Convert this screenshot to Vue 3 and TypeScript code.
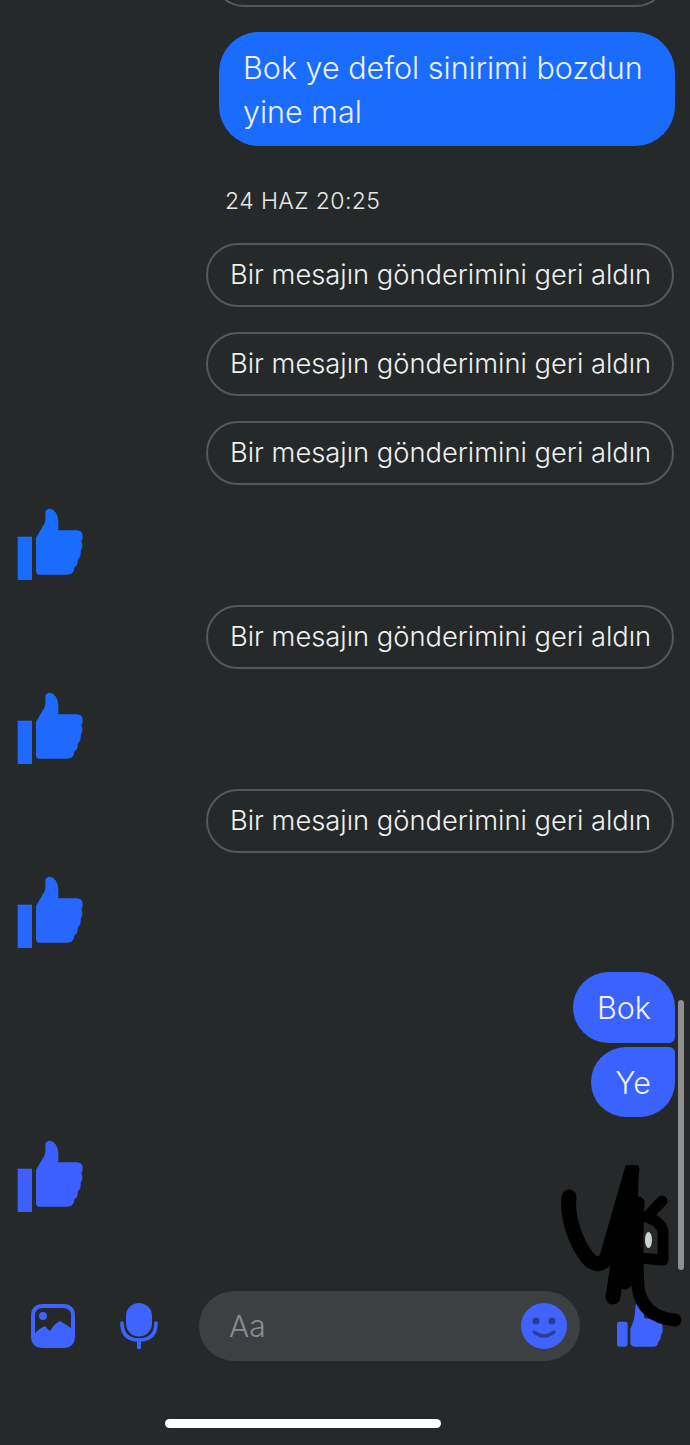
<script setup lang="ts">
type Item =
  | { kind: "pill" }
  | { kind: "like"; tone: string };

const items: Item[] = [
  { kind: "pill" },
  { kind: "pill" },
  { kind: "pill" },
  { kind: "like", tone: "#1a6cff" },
  { kind: "pill" },
  { kind: "like", tone: "#1f69ff" },
  { kind: "pill" },
  { kind: "like", tone: "#2766ff" },
];

const thumbHand =
  "M107 145 L133 100 Q136 92 135 70 Q136 57 148 57 Q170 60 174 92 L174 122 L232 122 Q247 124 247 140 Q247 150 243 156 Q250 170 241 184 Q243 200 232 210 Q234 226 222 233 Q222 255 200 255 L118 255 Q107 255 107 245 Z";
</script>

<template>
  <div class="screen">
    <div class="cut-pill"></div>

    <div class="bubble-long">Bok ye defol sinirimi bozdun yine mal</div>
    <div class="stamp">24 HAZ 20:25</div>

    <div class="feed">
      <template v-for="(item, i) in items" :key="i">
        <div v-if="item.kind === 'pill'" class="pill">Bir mesajın gönderimini geri aldın</div>
        <svg v-else class="like" viewBox="50 55 200 218" :style="{ color: item.tone }">
          <rect x="52" y="141" width="43" height="130" fill="currentColor" />
          <path :d="thumbHand" fill="currentColor" />
        </svg>
      </template>
    </div>

    <div class="short-group">
      <div class="short first">Bok</div>
      <div class="short last">Ye</div>
    </div>

    <svg class="like like-last" viewBox="50 55 200 218">
      <rect x="52" y="141" width="43" height="130" fill="currentColor" />
      <path :d="thumbHand" fill="currentColor" />
    </svg>

    <div class="composer">
      <svg class="ico-image" viewBox="0 0 44 44">
        <path
          fill-rule="evenodd"
          d="M12 0H32Q44 0 44 12V32Q44 44 32 44H12Q0 44 0 32V12Q0 0 12 0ZM12 4Q4 4 4 12V29Q9 24 14 22Q17 26 19 27Q24 19 29 17Q34 20 40 24V12Q40 4 32 4Z"
          fill="currentColor"
        />
        <circle cx="12" cy="12" r="4" fill="currentColor" />
      </svg>
      <svg class="ico-mic" viewBox="0 0 38 46">
        <rect x="6" y="0" width="26" height="33.5" rx="13" fill="currentColor" />
        <path d="M2 20Q2 37 19 37Q36 37 36 20" fill="none" stroke="currentColor" stroke-width="3.6" stroke-linecap="round" />
        <path d="M19 37V44.5" stroke="currentColor" stroke-width="4" stroke-linecap="round" />
      </svg>
      <div class="field">
        <span class="placeholder">Aa</span>
        <svg class="ico-smile" viewBox="0 0 46 46">
          <circle cx="23" cy="23" r="23" fill="currentColor" />
          <circle cx="15" cy="18" r="3.6" fill="#2a3f8f" />
          <circle cx="31" cy="18" r="3.6" fill="#2a3f8f" />
          <path d="M13 29Q23 37 33 29" fill="none" stroke="#2a3f8f" stroke-width="3.4" stroke-linecap="round" />
        </svg>
      </div>
      <svg class="ico-send" viewBox="345 488 142 140">
        <rect x="348" y="550" width="32" height="75" rx="7" fill="currentColor" />
        <path
          d="M388 572Q402 545 403 510Q404 490 414 495Q428 505 430 540L475 545Q487 550 484 566Q488 580 480 590Q480 605 472 610Q472 625 455 625L400 625Q388 625 388 612Z"
          fill="currentColor"
        />
      </svg>
    </div>

    <div class="home-bar"></div>

    <!-- overlays -->
    <div class="scrollbar"></div>
    <svg class="scribble" viewBox="0 0 130 170">
      <ellipse cx="88.5" cy="75" rx="3.5" ry="8" fill="#c9d2cc" />
      <g fill="none" stroke="#000" stroke-linecap="round" stroke-linejoin="round">
        <path stroke-width="15" d="M9 32C7 50 14 75 27 92C33 100 42 102 47 92L72 5L53 132" />
        <path stroke-width="13" d="M72 5Q72 60 65 118" />
        <path stroke-width="13" d="M78 38Q76 90 78 122Q82 152 115 155" />
        <path stroke-width="11" d="M102 36L87 52Q103 58 103 68V95L80 93" />
      </g>
    </svg>
  </div>
</template>

<style>
html,
body {
  margin: 0;
  background: #26292a;
}
</style>

<style scoped>
.screen {
  position: relative;
  width: 690px;
  height: 1445px;
  overflow: hidden;
  background: #26292a;
  font-family: Inter, "Liberation Sans", sans-serif;
  font-weight: 350;
  color: #f0f1f1;
}

.cut-pill {
  height: 64px;
  width: 456px;
  margin: -57px 0 25px 212px;
  border: 2px solid #55595b;
  border-radius: 32px;
  box-sizing: border-box;
}

.bubble-long {
  width: 456px;
  height: 114px;
  margin-left: 219px;
  box-sizing: border-box;
  padding: 14px 24px;
  background: #1a6cff;
  border-radius: 40px;
  font-size: 30.5px;
  line-height: 44px;
}

.stamp {
  margin: 41px 0 0 225px;
  font-size: 23px;
  line-height: 28px;
  letter-spacing: 0.4px;
  color: #e6e7e7;
}

.feed {
  display: flex;
  flex-direction: column;
  align-items: flex-start;
  margin-top: 28px;
}

.pill {
  width: 468px;
  height: 64px;
  margin: 0 0 25px 206px;
  box-sizing: border-box;
  border: 2px solid #55595b;
  border-radius: 32px;
  padding-left: 22px;
  font-size: 27.3px;
  line-height: 60px;
  white-space: nowrap;
}

.like {
  display: block;
  width: 66.7px;
  height: 72.7px;
  margin: -2px 0 24.3px 16.7px;
}

.short-group {
  display: flex;
  flex-direction: column;
  align-items: flex-end;
  gap: 4px;
  margin: -1px 15px 0 0;
}

.short {
  height: 71px;
  box-sizing: border-box;
  background: #3a62ff;
  font-size: 30.5px;
  line-height: 71px;
  padding: 0 24px;
}

.short.first {
  border-radius: 36px 36px 6px 36px;
}

.short.last {
  height: 70px;
  border-radius: 36px 6px 36px 36px;
}

.like-last {
  margin: 23px 0 0 16.7px;
  color: #3d5fff;
}

.composer {
  display: flex;
  align-items: center;
  margin-top: 78px;
  color: #3e63ff;
}

.ico-image {
  width: 44px;
  height: 44px;
  margin-left: 31px;
}

.ico-mic {
  width: 38px;
  height: 46px;
  margin-left: 45px;
}

.field {
  display: flex;
  align-items: center;
  justify-content: space-between;
  width: 381px;
  height: 70px;
  margin-left: 41px;
  padding: 0 13px 0 30px;
  box-sizing: border-box;
  background: #3c4042;
  border-radius: 35px;
}

.placeholder {
  font-size: 30px;
  color: #8a8d8f;
}

.ico-smile {
  width: 46px;
  height: 46px;
}

.ico-send {
  width: 47.3px;
  height: 46.7px;
  margin: -2px 0 0 36px;
}

.home-bar {
  width: 276px;
  height: 9px;
  margin: 58px 0 0 165px;
  background: #fff;
  border-radius: 5px;
}

.scrollbar {
  position: absolute;
  left: 678px;
  top: 1000px;
  width: 6px;
  height: 270px;
  border-radius: 3px;
  background: #8e8f90;
}

.scribble {
  position: absolute;
  left: 560px;
  top: 1165px;
  width: 130px;
  height: 170px;
}
</style>
